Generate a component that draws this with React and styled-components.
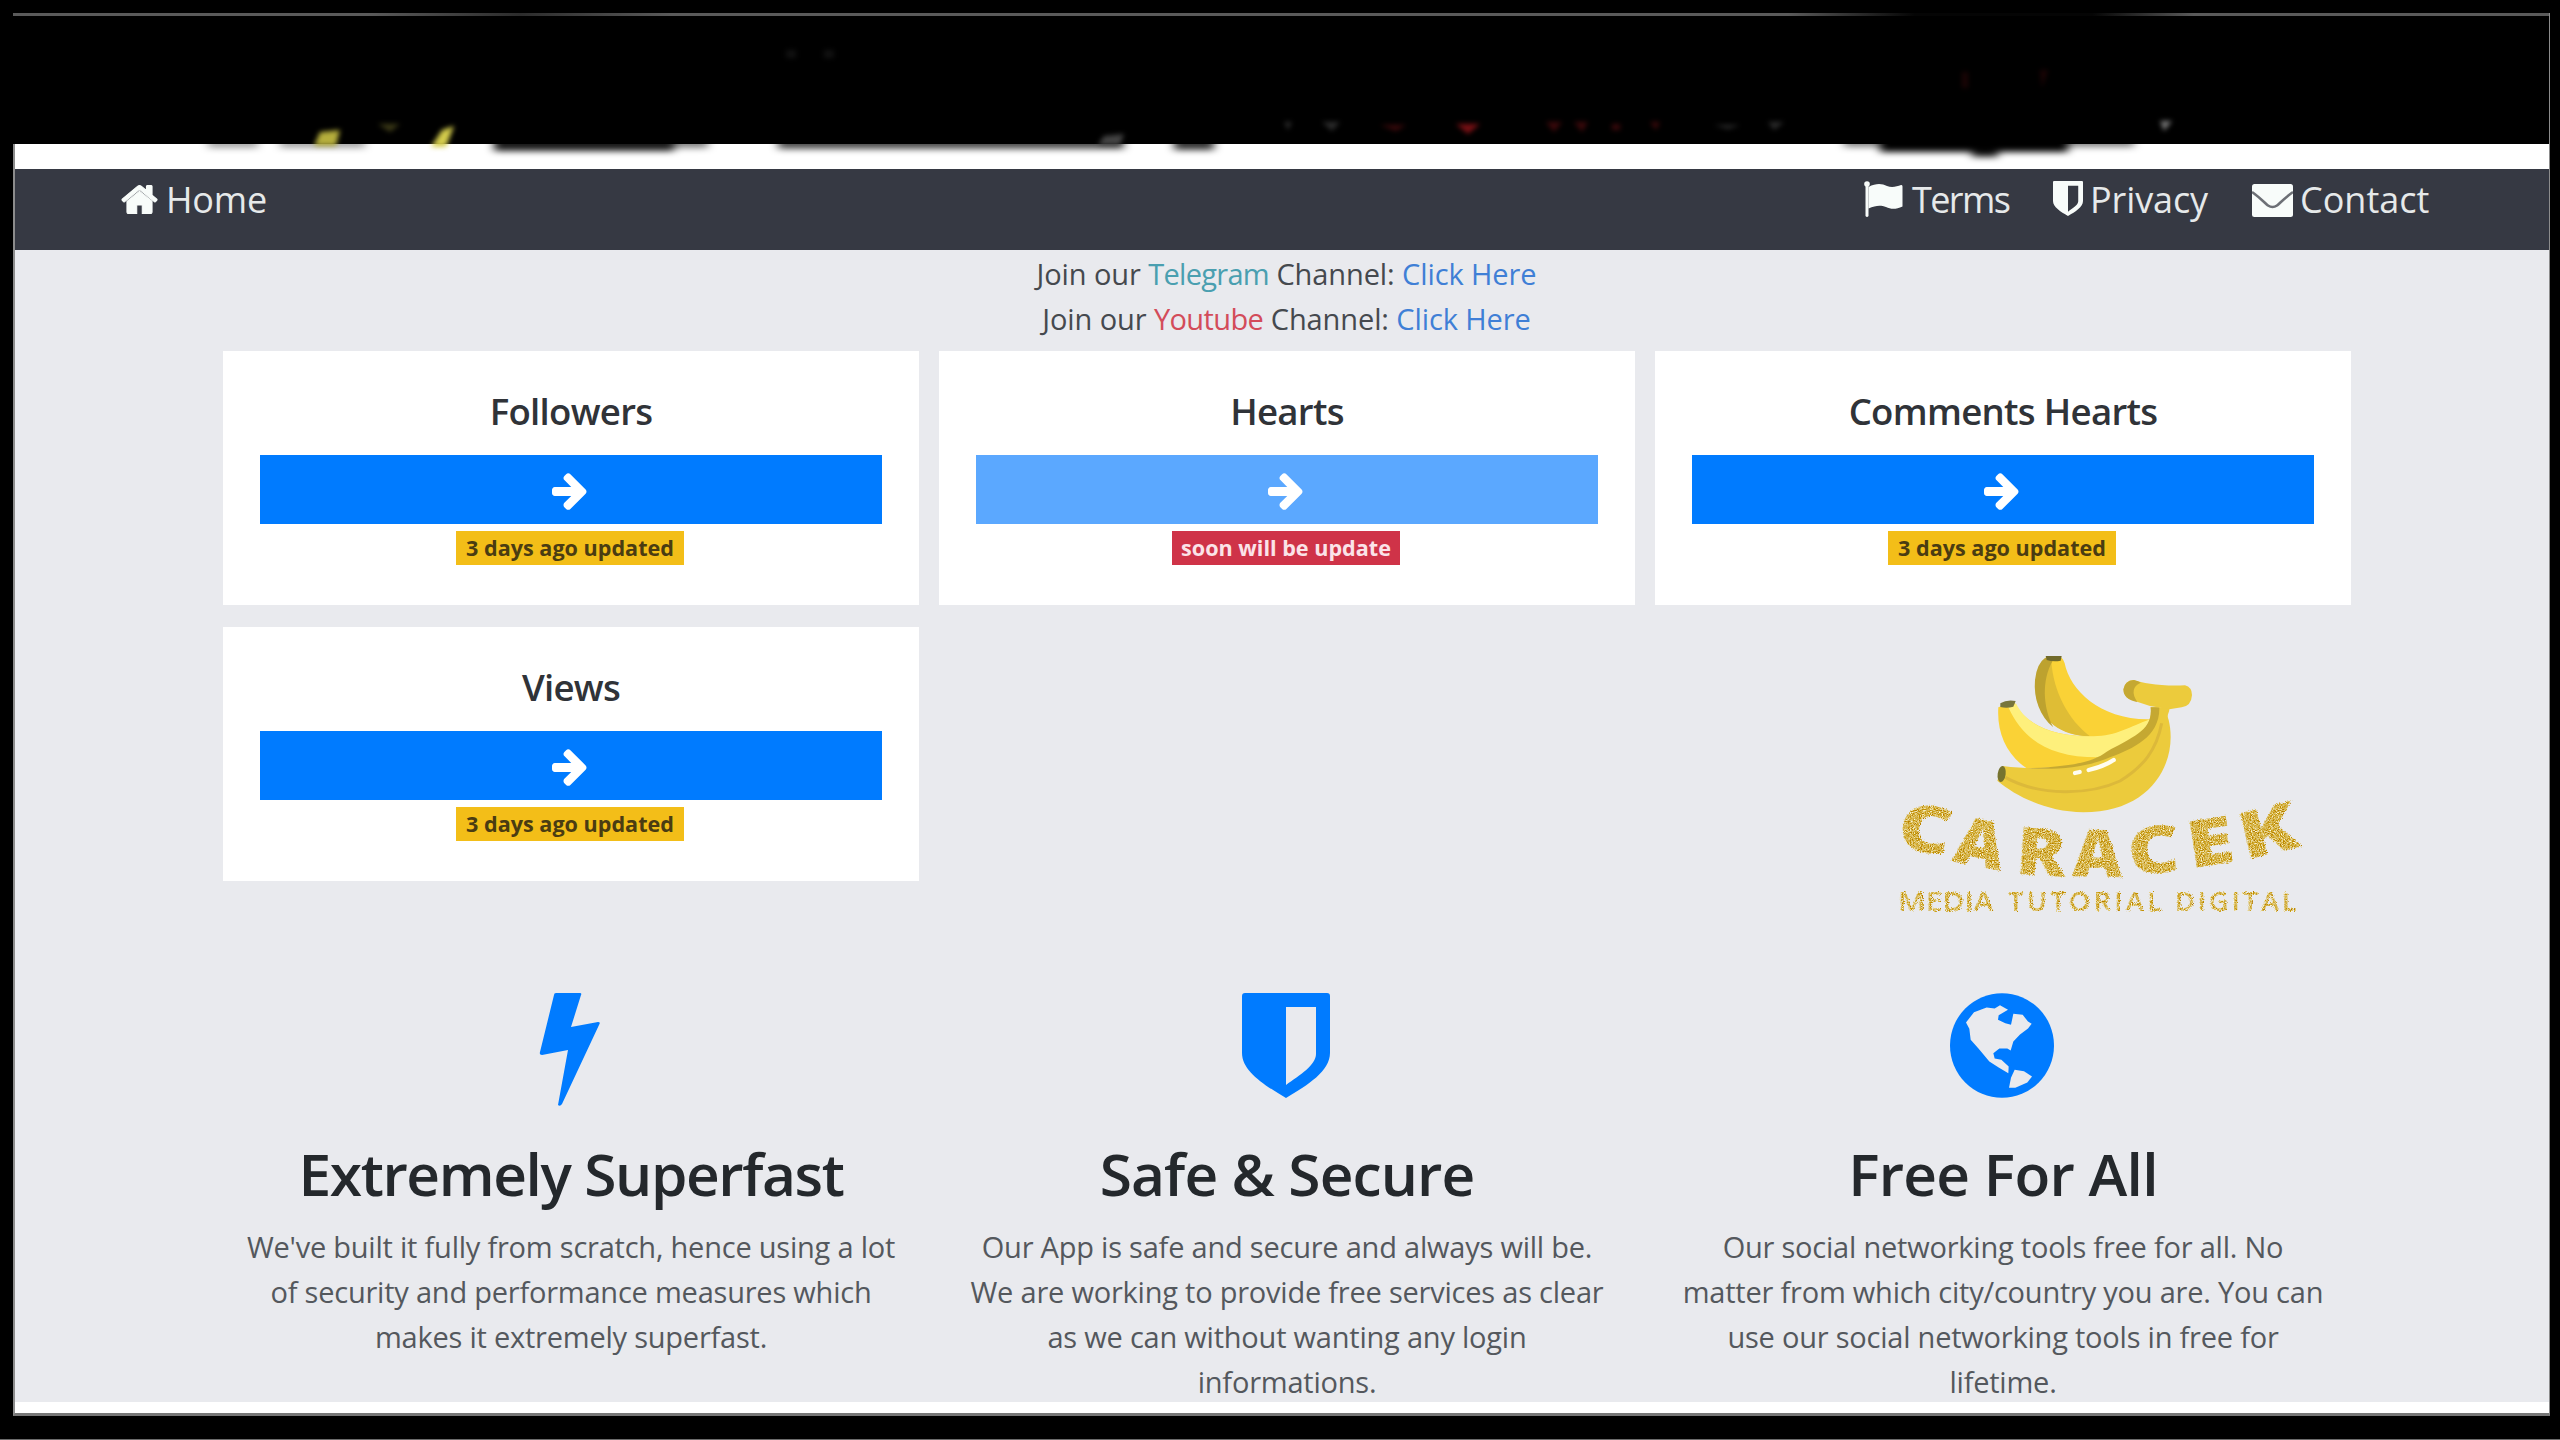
import React from "react";
import styled, { createGlobalStyle } from "styled-components";

const GlobalStyle = createGlobalStyle`
  * {
    box-sizing: border-box;
  }

  body {
    margin: 0;
    background: #000;
    font-family: "Open Sans", "Noto Sans", sans-serif;
    color: #212529;
  }
`;

const Screen = styled.div`
  position: relative;
  width: 2560px;
  height: 1440px;
  padding: 13px 10px 0 13px;
  overflow: hidden;
  background: #000;
  border-bottom: 1px solid #6b6b6b;
`;

const Window = styled.div`
  height: 1403px;
  display: flex;
  flex-direction: column;
  background: #fff;
  border-left: 2px solid #8c8c8c;
  border-right: 1px solid #8c8c8c;
  border-bottom: 3px solid #777;
`;

const TopBand = styled.div`
  height: 131px;
  flex: none;
  margin-left: -2px;
  background: linear-gradient(90deg, #5a5a5a 14%, #2c2c2c 20%, #5a5a5a 26%, #5a5a5a 70%, #050505 75%, #050505 82%, #5a5a5a 86%) top / 100% 3px no-repeat #000;
`;

const Smudges = styled.svg`
  position: absolute;
  left: 0;
  top: 0;
  pointer-events: none;
`;

const Navbar = styled.nav`
  height: 81px;
  flex: none;
  margin-top: 25px;
  padding: 3px 119px 0 105px;
  display: flex;
  justify-content: space-between;
  background: #363943;
`;

const NavGroup = styled.div`
  display: flex;
`;

const NavItem = styled.a`
  width: ${(props) => props.$width}px;
  height: 55px;
  display: flex;
  font-size: 36px;
  line-height: 55px;
  letter-spacing: ${(props) => props.$tracking || 0}px;
  white-space: nowrap;
  color: #e6e9ea;
`;

const NavIcon = styled.span`
  width: ${(props) => props.$width}px;
  padding-top: ${(props) => props.$top}px;
  flex: none;
  line-height: 0;
  color: #f8fcfa;
`;

const Main = styled.main`
  flex: none;
  height: 1152px;
  padding: 1px 199px 0 208px;
  background: #e9eaee;
`;

const JoinLine = styled.p`
  margin: 0;
  text-align: center;
  font-size: 29px;
  line-height: 45px;
  letter-spacing: -0.1px;
  color: #45494e;
`;

const Colored = styled.span`
  letter-spacing: ${(props) => props.$tracking || -0.1}px;
  color: ${(props) => props.$color};
`;

const CardGrid = styled.div`
  margin-top: 10px;
  display: grid;
  grid-template-columns: repeat(3, 696px);
  gap: 22px 20px;
`;

const Card = styled.div`
  height: 254px;
  padding: 38px 37px 0;
  display: flex;
  flex-direction: column;
  align-items: center;
  background: #fff;
`;

const CardTitle = styled.h5`
  margin: 0 0 21px;
  font-size: 36.6px;
  font-weight: 550;
  line-height: 45px;
  letter-spacing: -0.7px;
  color: #303338;
`;

const GoButton = styled.button`
  width: 622px;
  height: 69px;
  flex: none;
  padding: 0 3px 0 0;
  border: 0;
  display: flex;
  align-items: center;
  justify-content: center;
  color: #fff;
  background: ${(props) => (props.$disabled ? "#5ba8ff" : "#007bff")};
`;

const Badge = styled.span`
  width: 228px;
  height: 34px;
  margin: 7px 2px 0 0;
  text-align: center;
  font-size: 21.6px;
  font-weight: 700;
  line-height: 34px;
  color: ${(props) => (props.$danger ? "#fbe3e8" : "#4a3c12")};
  background: ${(props) => (props.$danger ? "#cf3348" : "#f3be18")};
`;

const FeatureGrid = styled.div`
  margin-top: 112px;
  display: grid;
  grid-template-columns: repeat(3, 696px);
  column-gap: 20px;
`;

const Feature = styled.div`
  display: flex;
  flex-direction: column;
  align-items: center;
`;

const FeatureIcon = styled.div`
  height: 144px;
  margin-right: 2px;
  line-height: 0;
  color: #007bff;
`;

const FeatureTitle = styled.h2`
  margin: 0 0 15px;
  font-size: 58.6px;
  font-weight: 550;
  line-height: 72px;
  letter-spacing: ${(props) => props.$tracking}px;
  color: #24282c;
`;

const FeatureText = styled.p`
  margin: 0;
  text-align: center;
  font-size: 29px;
  line-height: 45px;
  letter-spacing: -0.22px;
  white-space: nowrap;
  color: #54585d;
`;

const Watermark = styled.svg`
  position: absolute;
  left: 1860px;
  top: 620px;
  overflow: visible;
`;

const HomeIcon = () => (
  <svg width="39" height="39" viewBox="0 0 1792 1792" fill="currentColor">
    <path d="M1472 992v480q0 26-19 45t-45 19h-384v-384h-256v384h-384q-26 0-45-19t-19-45v-480q0-1 .5-3t.5-3l575-474 575 474q1 2 1 6zm223-69l-62 74q-8 9-21 11h-3q-13 0-21-7l-692-577-692 577q-12 8-24 7-13-2-21-11l-62-74q-8-10-7-23.5t11-21.5l719-599q32-26 76-26t76 26l244 204v-195q0-14 9-23t23-9h192q14 0 23 9t9 23v408l219 182q10 8 11 21.5t-7 23.5z" stroke="currentColor" strokeWidth="50" />
  </svg>
);

const FlagIcon = () => (
  <svg width="39" height="36" viewBox="0 0 39 36" fill="currentColor">
    <circle cx="3" cy="3" r="2.800" />
    <path d="M1.500 4H4.500V35Q3 37 1.500 35Z" />
    <path d="M4.500 6C12 2 18 2.500 23 5C28 7 33 5.500 37 4Q38.500 3.500 38.500 5.500V25.500C32 28.500 27 28.500 22 26C17 24 12 24 4.500 27.500Z" />
  </svg>
);

const ShieldIcon = ({ width, height }) => (
  <svg width={width} height={height} viewBox="0 0 88 105" preserveAspectRatio="none" fill="currentColor">
    <path fillRule="evenodd" d="M3 0H85Q88 0 88 3V60C88 78 66 92 44 105C22 92 0 78 0 60V3Q0 0 3 0ZM44 14V92C58 82 74 72 74 61V14Z" />
  </svg>
);

const EnvelopeIcon = () => (
  <svg width="41" height="33" viewBox="0 0 41 33">
    <rect width="41" height="33" rx="2.500" fill="currentColor" />
    <path d="M0 8C7 13 12 18 16 21.500Q20.500 24.500 25 21.500C29 18 34 13 41 8" fill="none" stroke="#6d7076" strokeWidth="2.600" />
  </svg>
);

const ArrowIcon = () => (
  <svg width="42" height="42" viewBox="0 0 1792 1792" fill="currentColor">
    <path d="M1600 960q0 54-37 91l-651 651q-39 37-91 37-51 0-90-37l-75-75q-38-38-38-91t38-91l293-293h-704q-52 0-84.500-37.500t-32.500-90.500v-128q0-53 32.500-90.500t84.500-37.500h704l-293-294q-38-36-38-90t38-90l75-75q38-38 90-38 53 0 91 38l651 651q37 35 37 90z" />
  </svg>
);

const BoltIcon = () => (
  <svg width="62" height="114" viewBox="0 0 62 114" fill="currentColor">
    <path d="M15 2Q15 0 17 0H41Q43 0 42 2L32 34L59 29Q62 29 60 32L23 111Q21 114 19 112L29 57L3 62Q0 62 1 59Z" />
  </svg>
);

const GlobeIcon = () => (
  <svg width="104" height="105" viewBox="150 98 312 314">
    <ellipse cx="306" cy="255" rx="156" ry="157" fill="currentColor" />
    <path
      fill="#e9eaee"
      d="M198 186L222 155L260 141L284 144L300 134L324 148L296 164L294 178L316 188L333 193L340 160L368 163L384 183L395 190L384 204L360 222L340 243L332 270L322 264L298 264L280 278L284 294L304 298L326 318L325 338L296 321L268 303L236 265L212 238L208 205Z"
    />
    <path fill="#e9eaee" d="M344 328L372 332L396 348L382 366L346 382L327 382L333 352Z" />
  </svg>
);

const navLinks = [
  { text: "Terms", icon: <FlagIcon />, width: 189, iconWidth: 48, top: 9, tracking: -1.6 },
  { text: "Privacy", icon: <ShieldIcon width={30} height={35} />, width: 199, iconWidth: 37, top: 9, tracking: -0.1 },
  { text: "Contact", icon: <EnvelopeIcon />, width: 178, iconWidth: 48, top: 12, tracking: 0 },
];

const cards = [
  { title: "Followers", badge: "3 days ago updated" },
  { title: "Hearts", badge: "soon will be update", soon: true },
  { title: "Comments Hearts", badge: "3 days ago updated" },
  { title: "Views", badge: "3 days ago updated" },
];

const features = [
  {
    title: "Extremely Superfast",
    tracking: -1.4,
    icon: <BoltIcon />,
    lines: [
      "We've built it fully from scratch, hence using a lot",
      "of security and performance measures which",
      "makes it extremely superfast.",
    ],
  },
  {
    title: "Safe & Secure",
    tracking: -0.9,
    icon: <ShieldIcon width={88} height={105} />,
    lines: [
      "Our App is safe and secure and always will be.",
      "We are working to provide free services as clear",
      "as we can without wanting any login",
      "informations.",
    ],
  },
  {
    title: "Free For All",
    tracking: -0.7,
    icon: <GlobeIcon />,
    lines: [
      "Our social networking tools free for all. No",
      "matter from which city/country you are. You can",
      "use our social networking tools in free for",
      "lifetime.",
    ],
  },
];

// x, y are the middle of each letter
const logoLetters = [
  { char: "C", x: 196, y: 627, w: 160, rotate: 10 },
  { char: "A", x: 360, y: 670, w: 150, rotate: 11 },
  { char: "R", x: 544, y: 697, w: 150, rotate: 4 },
  { char: "A", x: 712, y: 701, w: 150, rotate: 1 },
  { char: "C", x: 880, y: 690, w: 156, rotate: -4 },
  { char: "E", x: 1050, y: 666, w: 142, rotate: -9 },
  { char: "K", x: 1224, y: 632, w: 178, rotate: -14 },
];

const Logo = () => (
  <Watermark width="480" height="320" viewBox="0 0 1440 960">
    <defs>
      <filter id="glitter" x="-5%" y="-10%" width="110%" height="120%" colorInterpolationFilters="sRGB">
        <feTurbulence type="fractalNoise" baseFrequency="0.3" numOctaves="2" seed="4" result="noise" />
        <feColorMatrix in="noise" type="matrix" values="0.5 0 0 0 0.59  0.9 0 0 0 0.26  1.9 0 0 0 -0.65  0 0 0 0 1" result="gold" />
        <feDisplacementMap in="SourceGraphic" in2="noise" scale="12" xChannelSelector="R" yChannelSelector="G" result="rough" />
        <feComposite in="gold" in2="rough" operator="in" />
      </filter>
    </defs>

    {/* back banana */}
    <path fill="#fad236" d="M560 110H600Q610 115 614 130C630 210 720 300 868 298L800 350H690C600 345 545 300 530 235C522 180 530 135 560 110Z" />
    <path fill="#dfbd35" d="M556 115L574 124C580 215 625 300 690 349C600 348 545 300 530 235Z" />
    <path fill="#bda22f" d="M556 113L578 122C545 180 548 260 580 322C540 290 520 235 525 180Q530 130 556 113Z" />
    <path fill="#716a2b" d="M557 108L605 108L602 122Q580 126 560 120Z" />

    {/* middle banana */}
    <path fill="#fad236" d="M415 262L462 246C500 320 590 350 700 349C770 348 810 320 870 298L780 385L650 440L500 445C440 405 410 340 415 262Z" />
    <path fill="#fef07c" d="M445 262L468 250C500 320 590 350 700 349C770 348 810 320 870 298L840 350L725 412C570 415 490 360 445 262Z" />
    <path fill="#77763c" d="M421 250Q440 238 467 243L460 260Q440 266 421 261Z" />

    {/* front banana and its stem */}
    <path fill="#eccb3c" d="M428 438C540 452 650 445 720 412C800 370 880 340 872 262H928C930 280 918 280 926 300C955 420 880 577 670 577C560 575 470 530 412 482Z" />
    <path fill="#c5a832" d="M500 445C640 440 700 425 740 395C820 350 880 330 872 262H898C900 350 820 385 750 412C680 442 600 450 500 445Z" />
    <path fill="none" stroke="#dcb93a" strokeWidth="9" d="M436 472C540 530 690 525 780 483C850 440 890 390 905 310" />
    <path fill="#eccb3c" d="M820 180C850 190 900 199 975 196Q996 202 996 225Q994 258 965 262L928 268L870 258L822 242Q790 235 791 208Q794 182 820 180Z" />
    <path fill="#c5a832" d="M822 180Q836 183 842 188Q805 205 832 246Q790 238 790 208Q794 182 822 180Z" />
    <ellipse cx="425" cy="462" rx="12" ry="24" fill="#76732f" transform="rotate(8 425 462)" />
    <g stroke="#fffdf0" strokeWidth="13" strokeLinecap="round" fill="none">
      <path d="M645 459L659 456" />
      <path d="M686 450Q730 440 761 420" />
    </g>

    <g filter="url(#glitter)" fill="#d3ab30" fontFamily="'Open Sans', sans-serif" fontSize="196" fontWeight="800" textAnchor="middle">
      {logoLetters.map((letter, i) => (
        <text
          key={i}
          x={letter.x}
          y={letter.y + 69}
          textLength={letter.w}
          lengthAdjust="spacingAndGlyphs"
          transform={`rotate(${letter.rotate} ${letter.x} ${letter.y})`}
        >
          {letter.char}
        </text>
      ))}
    </g>
    <g filter="url(#glitter)" fill="#d3ab30" fontFamily="'Open Sans', sans-serif" fontSize="82" fontWeight="600">
      <text x="114" y="874" textLength="286" lengthAdjust="spacingAndGlyphs">MEDIA</text>
      <text x="444" y="874" textLength="462" lengthAdjust="spacing">TUTORIAL</text>
      <text x="944" y="874" textLength="366" lengthAdjust="spacing">DIGITAL</text>
    </g>
  </Watermark>
);

// leftovers of the covered headline showing round the black band
const BandSmudges = () => (
  <Smudges width="2560" height="200" viewBox="0 0 2560 200">
    <defs>
      <filter id="soft" x="-10%" y="-50%" width="120%" height="200%" colorInterpolationFilters="sRGB">
        <feGaussianBlur stdDeviation="5 3" />
      </filter>
      <filter id="softer" x="-10%" y="-50%" width="120%" height="200%" colorInterpolationFilters="sRGB">
        <feGaussianBlur stdDeviation="2.500" />
      </filter>
    </defs>
    <g filter="url(#soft)" fill="#000">
      <rect x="208" y="138" width="50" height="10" opacity="0.35" />
      <rect x="280" y="138" width="85" height="10" opacity="0.35" />
      <rect x="494" y="136" width="180" height="15" opacity="0.9" />
      <rect x="674" y="136" width="34" height="12" opacity="0.5" />
      <rect x="778" y="136" width="346" height="13" opacity="0.7" />
      <rect x="1174" y="136" width="40" height="14" opacity="0.8" />
      <rect x="1844" y="136" width="290" height="11" opacity="0.5" />
      <rect x="1880" y="136" width="188" height="16" />
      <rect x="1972" y="138" width="26" height="19" opacity="0.9" />
    </g>
    <g filter="url(#softer)">
      <path fill="#b5ae3c" d="M320 132L340 130L336 146H314Z" />
      <path fill="#d5cd4c" d="M442 130L454 126L446 147H431Z" />
      <path fill="#3b3916" d="M378 124H400L390 132Z" />
      <path fill="#444" d="M1104 136L1124 134L1120 145H1098Z" />
      <path fill="#7a1014" d="M1456 124H1480L1468 134Z" />
      <path fill="#3c090b" d="M1380 125H1406L1396 131ZM1546 122H1562L1554 132ZM1574 122H1588L1582 132ZM1612 124H1620V130H1612ZM1650 122H1660L1656 130Z" />
      <path fill="#2c2c2c" d="M1284 122H1292L1288 130ZM1322 122H1340L1332 131ZM1714 125H1740L1728 129ZM1768 122H1784L1774 130Z" />
      <path fill="#777" d="M2160 121H2172L2164 131Z" />
      <path fill="#1c0405" d="M1962 72H1968V88H1962ZM2040 70H2048L2042 88Z" />
      <path fill="#111" d="M786 50H796V58H786ZM824 50H834V58H824Z" />
    </g>
  </Smudges>
);

const App = () => {
  return (
    <>
      <GlobalStyle />
      <Screen>
        <Window>
          <TopBand />
          <Navbar>
            <NavItem $width={160} $tracking={-0.2}>
              <NavIcon $width={46} $top={8}>
                <HomeIcon />
              </NavIcon>
              Home
            </NavItem>
            <NavGroup>
              {navLinks.map((link) => (
                <NavItem key={link.text} $width={link.width} $tracking={link.tracking}>
                  <NavIcon $width={link.iconWidth} $top={link.top}>{link.icon}</NavIcon>
                  {link.text}
                </NavItem>
              ))}
            </NavGroup>
          </Navbar>

          <Main>
            <JoinLine>
              Join our <Colored $color="#4a9fb0" $tracking={-0.7}>Telegram</Colored> Channel: <Colored $color="#3f7fd6">Click Here</Colored>
            </JoinLine>
            <JoinLine>
              Join our <Colored $color="#d34c5a" $tracking={-0.6}>Youtube</Colored> Channel: <Colored $color="#3f7fd6">Click Here</Colored>
            </JoinLine>

            <CardGrid>
              {cards.map((card) => (
                <Card key={card.title}>
                  <CardTitle>{card.title}</CardTitle>
                  <GoButton $disabled={card.soon}>
                    <ArrowIcon />
                  </GoButton>
                  <Badge $danger={card.soon}>{card.badge}</Badge>
                </Card>
              ))}
            </CardGrid>

            <FeatureGrid>
              {features.map((feature) => (
                <Feature key={feature.title}>
                  <FeatureIcon>{feature.icon}</FeatureIcon>
                  <FeatureTitle $tracking={feature.tracking}>{feature.title}</FeatureTitle>
                  <FeatureText>
                    {feature.lines.map((line) => (
                      <React.Fragment key={line}>
                        {line}
                        <br />
                      </React.Fragment>
                    ))}
                  </FeatureText>
                </Feature>
              ))}
            </FeatureGrid>
          </Main>
        </Window>
        <BandSmudges />
        <Logo />
      </Screen>
    </>
  );
};

export default App;
